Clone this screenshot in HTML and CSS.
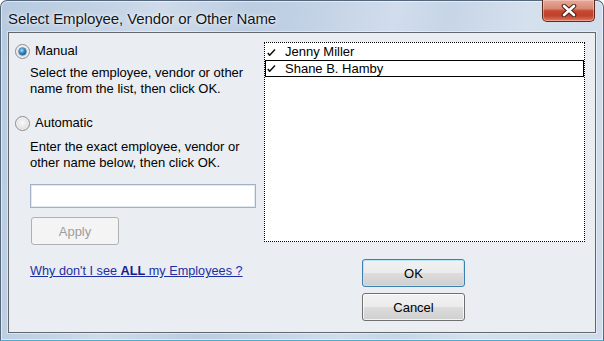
FILE: index.html
```html
<!DOCTYPE html>
<html lang="en">
<head>
  <meta charset="utf-8">
  <title>Select Employee, Vendor or Other Name</title>
  <link rel="stylesheet" href="styles.css">
</head>
<body>
  <div class="window">
    <div class="titlebar">
      <span class="title">Select Employee, Vendor or Other Name</span>
      <div class="close">
        <svg width="16" height="13" viewBox="0 0 16 13">
          <path d="M3 2 L13 11 M13 2 L3 11" stroke="#4a2119" stroke-width="4.6" stroke-linecap="round"/>
          <path d="M3 2 L13 11 M13 2 L3 11" stroke="#fff" stroke-width="2.6" stroke-linecap="round"/>
        </svg>
      </div>
    </div>

    <div class="client">
      <!-- left side: mode choice -->
      <div class="left">
        <label class="radio-row"><span class="radio checked"></span>Manual</label>
        <p class="hint">Select the employee, vendor or other<br>name from the list, then click OK.</p>

        <label class="radio-row radio-auto"><span class="radio"></span>Automatic</label>
        <p class="hint hint-auto">Enter the exact employee, vendor or<br>other name below, then click OK.</p>

        <input class="name-input" type="text">
        <button class="btn btn-apply" disabled>Apply</button>

        <a class="help-link" href="#">Why don't I see <b>ALL</b> my Employees ?</a>
      </div>

      <!-- right side: list + buttons -->
      <div class="right">
        <ul class="emp-list">
          <li>
            <svg class="tick" width="9" height="7" viewBox="0 0 9 7"><polyline points="0.8,4 2.6,6.3 8,0.6" fill="none" stroke="#111" stroke-width="1.5"/></svg>
            Jenny Miller
          </li>
          <li class="focus">
            <svg class="tick" width="9" height="7" viewBox="0 0 9 7"><polyline points="0.8,4 2.6,6.3 8,0.6" fill="none" stroke="#111" stroke-width="1.5"/></svg>
            Shane B. Hamby
          </li>
        </ul>
        <button class="btn btn-ok">OK</button>
        <button class="btn btn-cancel">Cancel</button>
      </div>
    </div>
  </div>
</body>
</html>
```

FILE: styles.css
```css
html, body { margin: 0; padding: 0; }
body {
    width: 604px;
    height: 341px;
    font-family: "Liberation Sans", Arial, sans-serif;
    font-size: 13px;
    color: #000;
    background: #fff;
}

/* window frame */
.window {
    box-sizing: border-box;
    width: 604px;
    height: 341px;
    display: flex;
    flex-direction: column;
    padding: 0 7px 7px 7px;
    border: 1px solid #54677c;
    border-bottom-color: #4fa9cf;
    border-radius: 7px 7px 0 0;
    background: linear-gradient(100deg,
        #b7cadf 0%, #c5d4e6 18%, #cfdbea 24%, #bccde2 38%,
        #c3d2e5 48%, #d1dded 60%, #c6d5e7 68%, #d5e0ed 80%, #cfdbea 100%);
    box-shadow: inset 0 0 0 1px rgba(255,255,255,.55);
}

.titlebar {
    height: 31px;
    display: flex;
    justify-content: space-between;
    align-items: flex-start;
}
.title {
    padding-top: 9px;
    font-size: 15px;
    line-height: 18px;
    letter-spacing: -0.1px;
    color: #0f1522;
    text-shadow: 0 0 6px rgba(255,255,255,.9), 0 0 2px rgba(255,255,255,.9);
}
.close {
    box-sizing: border-box;
    width: 53px;
    height: 22px;
    margin-right: 1px;
    margin-top: -1px;
    display: flex;
    align-items: center;
    justify-content: center;
    border: 1px solid #5d2a20;
    border-top: none;
    border-radius: 0 0 5px 5px;
    background: linear-gradient(#e6a999 0%, #d98a76 40%, #c6482f 52%, #c1412a 75%, #dc7a62 100%);
    box-shadow: inset 0 0 0 1px rgba(255,220,210,.45);
}

/* client area */
.client {
    flex: 1;
    display: flex;
    border: 1px solid #61676d;
    background: #eaedf2;
    box-shadow: 0 0 0 1px rgba(255,255,255,.45);
}

.left {
    width: 249px;
    padding-left: 6px;
    display: flex;
    flex-direction: column;
    align-items: flex-start;
}
.radio-row {
    display: flex;
    align-items: center;
    height: 16px;
    line-height: 16px;
    margin-top: 10px;
}
.radio-auto { margin-top: 18px; }

.radio {
    position: relative;
    box-sizing: border-box;
    width: 15px;
    height: 15px;
    margin-right: 5px;
    border-radius: 50%;
    border: 1px solid #8b8c8e;
    background: radial-gradient(circle at 50% 45%, #fafafa 0%, #e4e4e4 55%, #c9c9c9 100%);
    box-shadow: inset 0 0 0 1px #f7f7f7;
}
.radio.checked::after {
    content: "";
    position: absolute;
    left: 3px;
    top: 3px;
    width: 7px;
    height: 7px;
    border-radius: 50%;
    background: radial-gradient(circle at 40% 35%, #b6e6fb 0%, #3b98d6 35%, #175ba0 70%, #0d3870 100%);
    box-shadow: 0 0 0 0.5px #1b4a7f;
}

.hint {
    margin: 6px 0 0 15px;
    line-height: 16px;
}
.hint-auto { margin-top: 8px; }

.name-input {
    box-sizing: border-box;
    width: 226px;
    height: 24px;
    margin: 13px 0 0 15px;
    padding: 0 3px;
    border: 1px solid #a3b1c4;
    box-shadow: inset 0 0 0 1px #e3e9f0;
    background: #fff;
    font: inherit;
    outline: none;
}

.btn {
    box-sizing: border-box;
    height: 28px;
    padding: 0;
    border: 1px solid #707070;
    border-radius: 3px;
    font-family: inherit;
    font-size: 13px;
    color: #000;
    background: linear-gradient(#f2f2f2 0%, #ebebeb 49%, #dddddd 50%, #cfcfcf 100%);
    box-shadow: inset 0 0 0 1px rgba(255,255,255,.75);
}
.btn-apply {
    width: 88px;
    margin: 9px 0 0 16px;
    border-color: #adb2b5;
    background: #f4f4f4;
    color: #9d9d9d;
    box-shadow: none;
}
.help-link {
    margin: 18px 0 0 15px;
    font-size: 12.7px;
    line-height: 16px;
    color: #1c2fa6;
    text-decoration: underline;
}
.help-link b { color: #122290; }

.right {
    display: flex;
    flex-direction: column;
    align-items: flex-start;
    padding-top: 9px;
}
.emp-list {
    box-sizing: border-box;
    width: 321px;
    height: 200px;
    margin: 0;
    padding: 1px 0 0 0;
    list-style: none;
    border: 1px dotted #000;
    background: #fff;
}
.emp-list li {
    box-sizing: border-box;
    display: flex;
    align-items: center;
    height: 16px;
    line-height: 16px;
    padding-left: 2px;
}
.emp-list li.focus {
    height: 17px;
    outline: 1px solid #000;
    outline-offset: -1px;
}
.tick {
    margin-right: 9px;
    flex: none;
}

.btn-ok {
    width: 103px;
    margin: 17px 0 0 98px;
    border-color: #3c7fb1;
    box-shadow: inset 0 0 0 1px #b9e6f9;
}
.btn-cancel {
    width: 103px;
    margin: 6px 0 0 98px;
}
```
